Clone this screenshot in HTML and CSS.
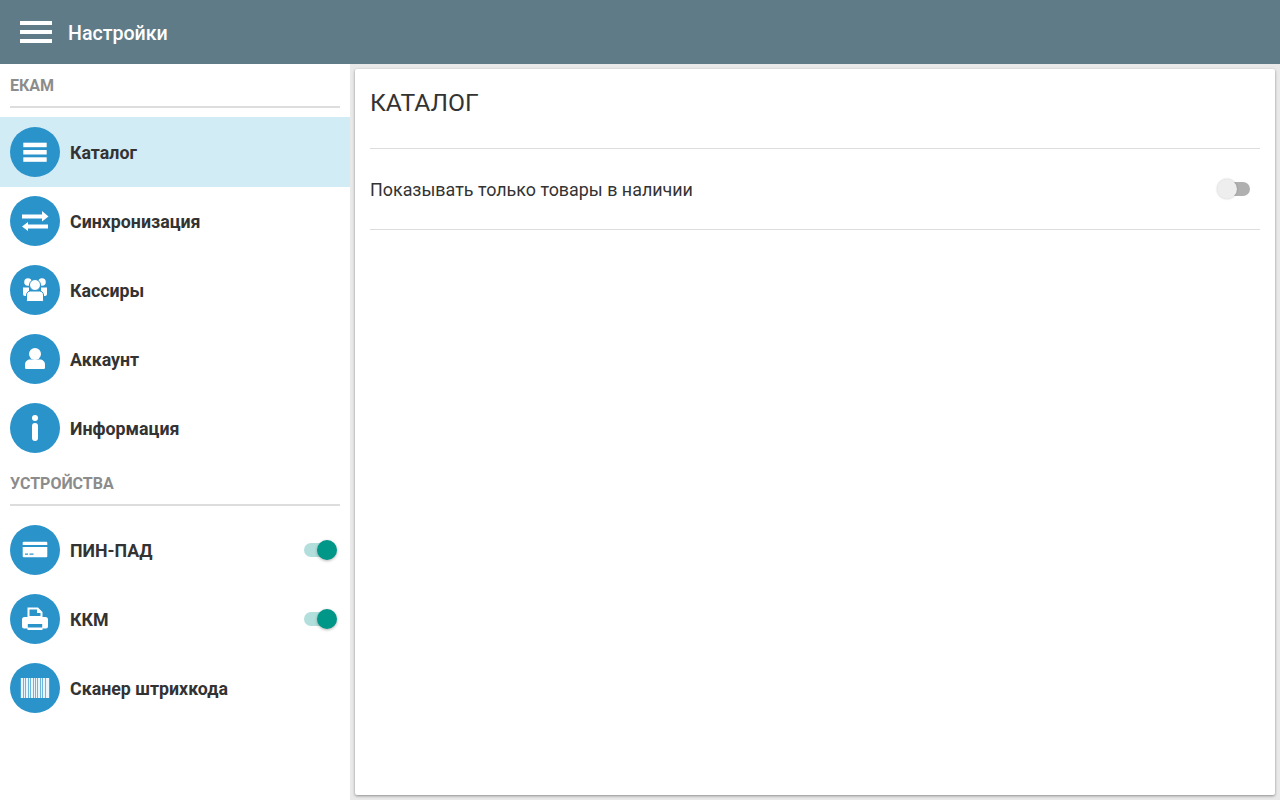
FILE: index.html
```html
<!DOCTYPE html>
<html lang="ru">
  <head>
    <meta charset="UTF-8" />
    <meta name="viewport" content="width=device-width, initial-scale=1.0" />
    <title>Настройки</title>
    <link rel="stylesheet" href="styles.css">
  </head>
  <body>
    <header class="topbar">
      <svg class="menu-icon" width="32" height="22" viewBox="0 0 32 22">
        <rect width="32" height="4" fill="#fff" />
        <rect y="9" width="32" height="4" fill="#fff" />
        <rect y="18" width="32" height="4" fill="#fff" />
      </svg>
      <div class="topbar-title">Настройки</div>
    </header>

    <div class="layout">
      <nav class="sidebar">
        <div class="section-title">ЕКАМ</div>

        <div class="nav-item selected">
          <div class="nav-icon">
            <svg width="50" height="50" viewBox="0 0 50 50" fill="#fff">
              <rect x="13.300" y="15.700" width="23.400" height="4.500" />
              <rect x="13.300" y="23" width="23.400" height="4.500" />
              <rect x="13.300" y="30.300" width="23.400" height="4.500" />
            </svg>
          </div>
          <div class="nav-label">Каталог</div>
        </div>

        <div class="nav-item">
          <div class="nav-icon">
            <svg width="50" height="50" viewBox="0 0 50 50" fill="#fff">
              <path d="M12 18.500h20V15l6.500 5.500L32 25.500v-3H12z" />
              <path d="M38 28.500H18V26l-6 4.500 6 4.500v-2.500h20z" />
            </svg>
          </div>
          <div class="nav-label">Синхронизация</div>
        </div>

        <div class="nav-item">
          <div class="nav-icon">
            <svg width="50" height="50" viewBox="0 0 50 50" fill="#fff">
              <circle cx="18" cy="17" r="3.800" />
              <circle cx="32" cy="17" r="3.800" />
              <path d="M13 22.500h6v8.500h-4a2 2 0 0 1-2-2z" />
              <path d="M37 22.500h-6v8.500h4a2 2 0 0 0 2-2z" />
              <circle cx="25" cy="20" r="5.500" stroke="#2a93ca" stroke-width="1" />
              <path d="M16.500 35v-5c0-2.500 2-4 4-4h9c2 0 4 1.500 4 4v5c0 1-.8 1.500-1.500 1.500H18c-.7 0-1.500-.5-1.500-1.500z" stroke="#2a93ca" stroke-width="1" />
            </svg>
          </div>
          <div class="nav-label">Кассиры</div>
        </div>

        <div class="nav-item">
          <div class="nav-icon">
            <svg width="50" height="50" viewBox="0 0 50 50" fill="#fff">
              <circle cx="25" cy="20" r="6" />
              <path d="M15 33.500v-3c0-3 2.500-5 5-5h10c2.500 0 5 2 5 5v3c0 1-.8 1.500-1.500 1.500h-17c-.7 0-1.500-.5-1.500-1.500z" />
            </svg>
          </div>
          <div class="nav-label">Аккаунт</div>
        </div>

        <div class="nav-item">
          <div class="nav-icon">
            <svg width="50" height="50" viewBox="0 0 50 50" fill="#fff">
              <circle cx="25" cy="15" r="3" />
              <rect x="22" y="20" width="6" height="18" rx="3" />
            </svg>
          </div>
          <div class="nav-label">Информация</div>
        </div>

        <div class="section-title">УСТРОЙСТВА</div>

        <div class="nav-item">
          <div class="nav-icon">
            <svg width="50" height="50" viewBox="0 0 50 50" fill="#fff">
              <path d="M13.700 16.700h22.600a1 1 0 0 1 1 1V20H12.700v-2.300a1 1 0 0 1 1-1z" />
              <path d="M12.700 22h24.600v9.300a1 1 0 0 1-1 1H13.700a1 1 0 0 1-1-1zm2.300 6.500v1.300h3v-1.300zm4.500 0v1.300h4v-1.300z" fill-rule="evenodd" />
            </svg>
          </div>
          <div class="nav-label">ПИН-ПАД</div>
          <div class="toggle on"><div class="knob"></div></div>
        </div>

        <div class="nav-item">
          <div class="nav-icon">
            <svg width="50" height="50" viewBox="0 0 50 50" fill="#fff">
              <path d="M17.500 13.500H28l4.500 4.500v6h-15zm2 2V22h11v-3h-3.500v-3.500z" fill-rule="evenodd" />
              <path d="M14.500 23h21a2.500 2.500 0 0 1 2.500 2.500v7a2 2 0 0 1-2 2h-3.500V36h-15v-1.500H14a2 2 0 0 1-2-2v-7a2.500 2.500 0 0 1 2.500-2.500zm3.300 7v3.500h14.400V30z" fill-rule="evenodd" />
            </svg>
          </div>
          <div class="nav-label">ККМ</div>
          <div class="toggle on"><div class="knob"></div></div>
        </div>

        <div class="nav-item">
          <div class="nav-icon">
            <svg width="50" height="50" viewBox="0 0 50 50" fill="#eaf5fb">
              <rect x="10.500" y="15" width="29" height="20" opacity="0.35" />
              <rect x="11" y="15" width="2" height="20" />
              <rect x="14" y="15" width="1" height="20" />
              <rect x="16" y="15" width="2" height="20" />
              <rect x="19" y="15" width="1" height="20" />
              <rect x="21" y="15" width="2" height="20" />
              <rect x="24" y="15" width="1" height="20" />
              <rect x="26" y="15" width="1" height="20" />
              <rect x="28" y="15" width="2" height="20" />
              <rect x="31" y="15" width="1" height="20" />
              <rect x="33" y="15" width="2" height="20" />
              <rect x="36" y="15" width="3" height="20" />
            </svg>
          </div>
          <div class="nav-label">Сканер штрихкода</div>
        </div>
      </nav>

      <main class="content">
        <div class="card">
          <h2>КАТАЛОГ</h2>
          <div class="setting-row">
            <div class="setting-label">Показывать только товары в наличии</div>
            <div class="toggle off"><div class="knob"></div></div>
          </div>
        </div>
      </main>
    </div>
  </body>
</html>
```

FILE: styles.css
```css
* {
  margin: 0;
  padding: 0;
  box-sizing: border-box;
  font-family: Roboto, "Liberation Sans", sans-serif;
}
body {
  width: 1280px;
  height: 800px;
  overflow: hidden;
  background-color: #e9e9e9;
  color: #333;
  display: flex;
  flex-direction: column;
}
.topbar {
  height: 64px;
  flex-shrink: 0;
  background-color: #607b88;
  color: white;
  display: flex;
  align-items: center;
  padding-left: 20px;
  gap: 16px;
}
.topbar-title {
  font-size: 19.6px;
  font-weight: 500;
  padding-top: 2px;
}
.layout {
  flex: 1;
  display: flex;
  min-height: 0;
}
.sidebar {
  width: 350px;
  flex-shrink: 0;
  background: white;
}
.section-title {
  height: 53px;
  margin: 0 10px;
  padding-top: 12px;
  line-height: 19px;
  font-size: 16px;
  font-weight: 700;
  color: #8c8c8c;
  background: linear-gradient(#ddd, #ddd) no-repeat 0 42px / 100% 2px;
}
.nav-item {
  position: relative;
  height: 70px;
  margin-bottom: -1px;
  padding: 10px;
  display: flex;
  align-items: center;
  gap: 10px;
}
.nav-item.selected {
  background-color: #d2ecf6;
}
.nav-icon {
  width: 50px;
  height: 50px;
  flex-shrink: 0;
  border-radius: 50%;
  background-color: #2a93ca;
}
.nav-icon svg {
  display: block;
}
.nav-label {
  font-size: 17.8px;
  font-weight: 700;
  color: #333;
}
.toggle {
  position: relative;
  height: 14px;
  border-radius: 7px;
}
.toggle .knob {
  position: absolute;
  top: -3px;
  width: 20px;
  height: 20px;
  border-radius: 50%;
  box-shadow: 0 1px 3px rgba(0, 0, 0, 0.3);
}
.nav-item .toggle {
  width: 29px;
  margin-left: auto;
  margin-right: 7px;
}
.toggle.on {
  background-color: #b2dfdb;
}
.toggle.on .knob {
  right: -4px;
  background-color: #009688;
}
.toggle.off {
  width: 32px;
  background-color: #b0b0b0;
}
.toggle.off .knob {
  left: -1px;
  background-color: #eee;
  box-shadow: 0 0 2px rgba(0, 0, 0, 0.25);
}
.content {
  flex: 1;
  padding: 5px;
  min-width: 0;
}
.card {
  height: 100%;
  background: white;
  border-radius: 2px;
  padding: 0 15px;
  box-shadow: 0 1px 3px rgba(0, 0, 0, 0.4);
}
h2 {
  height: 80px;
  padding-top: 20px;
  font-size: 24.7px;
  line-height: 28px;
  font-weight: 400;
  color: #333;
  border-bottom: 1px solid #ddd;
}
.setting-row {
  height: 81px;
  display: flex;
  align-items: center;
  justify-content: space-between;
  padding-right: 10px;
  border-bottom: 1px solid #ddd;
}
.setting-label {
  font-size: 17.9px;
  color: #333;
}
```
